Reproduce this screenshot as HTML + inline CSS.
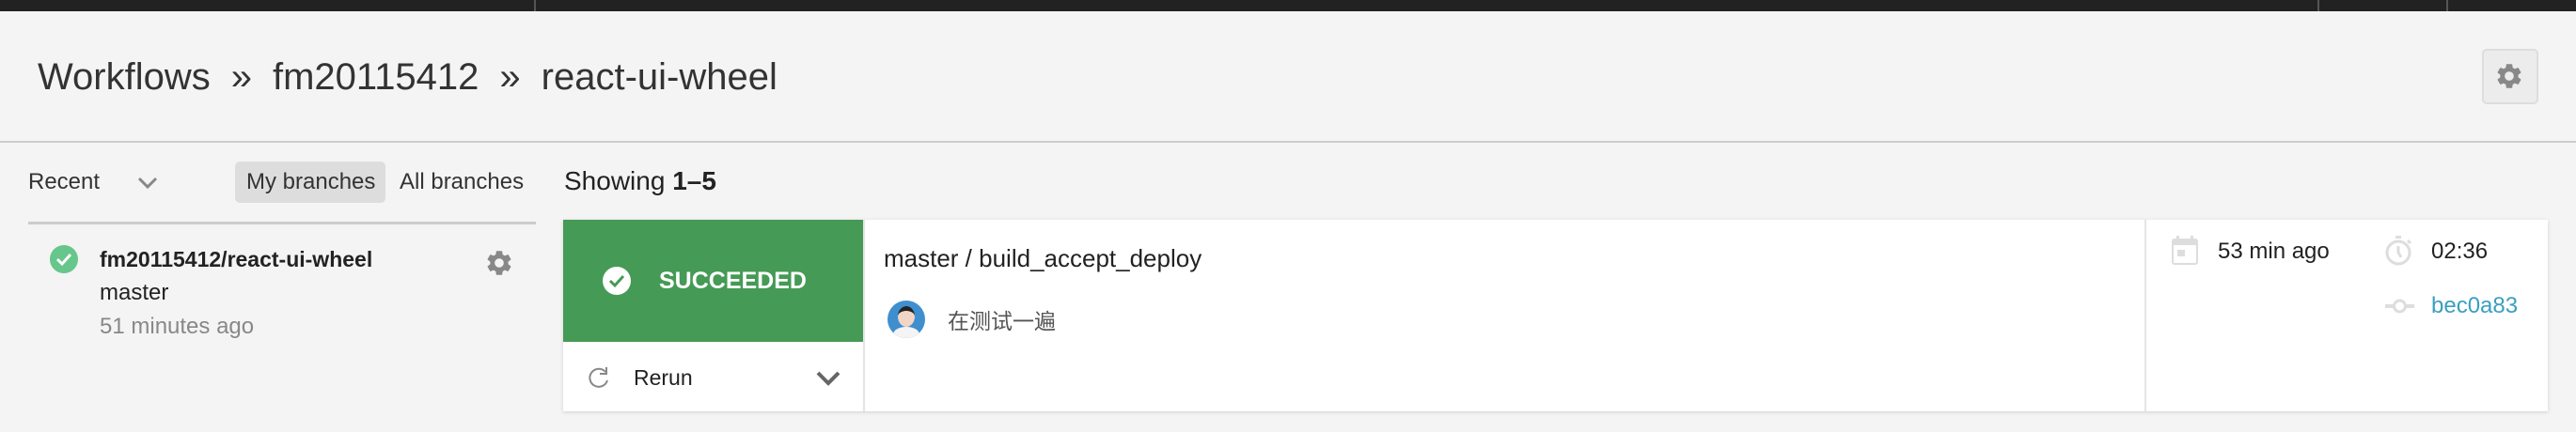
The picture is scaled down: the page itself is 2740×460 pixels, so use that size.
<!DOCTYPE html>
<html><head><meta charset="utf-8"><style>
*{margin:0;padding:0;box-sizing:border-box}
body{width:2740px;height:460px;background:#f4f4f4;font-family:"Liberation Sans","Noto Sans CJK SC",sans-serif;position:relative;overflow:hidden;color:#222}
.a{position:absolute;white-space:nowrap}
</style></head><body>
<div class="a" style="left:0;top:0;width:2740px;height:12px;background:#222"></div>
<div class="a" style="left:568px;top:0;width:2px;height:12px;background:#555"></div>
<div class="a" style="left:2465px;top:0;width:2px;height:12px;background:#555"></div>
<div class="a" style="left:2602px;top:0;width:2px;height:12px;background:#555"></div>
<div class="a" style="left:0;top:150px;width:2740px;height:2px;background:#ccc"></div>

<div class="a" style="left:40px;top:58px;font-size:40px;color:#333;line-height:48px">Workflows<span style="margin:0 22px">»</span>fm20115412<span style="margin:0 22px">»</span>react-ui-wheel</div>

<div class="a" style="left:2640px;top:52px;width:60px;height:59px;background:#ececec;border:2px solid #ddd;border-radius:5px"></div>
<svg class="a" style="left:2653px;top:65px" width="32" height="32" viewBox="0 0 24 24"><path fill="#888" d="M19.14 12.94c.04-.3.06-.61.06-.94 0-.32-.02-.64-.07-.94l2.03-1.58a.49.49 0 0 0 .12-.61l-1.92-3.32a.488.488 0 0 0-.59-.22l-2.39.96c-.5-.38-1.03-.7-1.62-.94l-.36-2.54a.484.484 0 0 0-.48-.41h-3.84c-.24 0-.43.17-.47.41l-.36 2.54c-.59.24-1.13.57-1.62.94l-2.39-.96c-.22-.08-.47 0-.59.22L2.74 8.87c-.12.21-.08.47.12.61l2.03 1.58c-.05.3-.09.63-.09.94s.02.64.07.94l-2.03 1.58a.49.49 0 0 0-.12.61l1.92 3.32c.12.22.37.29.59.22l2.39-.96c.5.38 1.03.7 1.62.94l.36 2.54c.05.24.24.41.48.41h3.84c.24 0 .44-.17.47-.41l.36-2.54c.59-.24 1.13-.56 1.62-.94l2.39.96c.22.08.47 0 .59-.22l1.92-3.32c.12-.22.07-.47-.12-.61l-2.01-1.58zM12 15.6c-1.98 0-3.6-1.62-3.6-3.6s1.62-3.6 3.6-3.6 3.6 1.62 3.6 3.6-1.62 3.6-3.6 3.6z"/></svg>

<div class="a" style="left:30px;top:180px;font-size:24px;line-height:28px;color:#333">Recent</div>
<svg class="a" style="left:146px;top:188px" width="22" height="14" viewBox="0 0 22 14"><path d="M2 2l9 9 9-9" fill="none" stroke="#888" stroke-width="3"/></svg>
<div class="a" style="left:250px;top:172px;width:160px;height:44px;background:#ddd;border-radius:5px"></div>
<div class="a" style="left:262px;top:180px;font-size:24px;line-height:28px;color:#333">My branches</div>
<div class="a" style="left:425px;top:180px;font-size:24px;line-height:28px;color:#333">All branches</div>
<div class="a" style="left:30px;top:236px;width:540px;height:3px;background:#ccc"></div>

<svg class="a" style="left:53px;top:261px" width="30" height="30" viewBox="0 0 30 30"><circle cx="15" cy="15" r="15" fill="#66c68b"/><path d="M8 15l5 5 9-10" fill="none" stroke="#fff" stroke-width="3"/></svg>
<div class="a" style="left:106px;top:262px;font-size:23px;font-weight:bold;line-height:28px;color:#222">fm20115412/react-ui-wheel</div>
<div class="a" style="left:106px;top:298px;font-size:24px;line-height:28px;color:#222">master</div>
<div class="a" style="left:106px;top:334px;font-size:24px;line-height:28px;color:#888">51 minutes ago</div>
<svg class="a" style="left:515px;top:264px" width="32" height="32" viewBox="0 0 24 24"><path fill="#888" d="M19.14 12.94c.04-.3.06-.61.06-.94 0-.32-.02-.64-.07-.94l2.03-1.58a.49.49 0 0 0 .12-.61l-1.92-3.32a.488.488 0 0 0-.59-.22l-2.39.96c-.5-.38-1.03-.7-1.62-.94l-.36-2.54a.484.484 0 0 0-.48-.41h-3.84c-.24 0-.43.17-.47.41l-.36 2.54c-.59.24-1.130.57-1.620.94l-2.39-.96c-.22-.08-.47 0-.59.22L2.74 8.87c-.12.21-.08.47.12.61l2.03 1.58c-.05.3-.09.63-.09.94s.02.64.07.94l-2.03 1.58a.49.49 0 0 0-.12.61l1.92 3.32c.12.22.37.29.59.22l2.39-.96c.5.38 1.03.7 1.62.94l.36 2.54c.05.24.24.41.48.41h3.84c.24 0 .44-.17.47-.41l.36-2.54c.59-.24 1.13-.56 1.62-.94l2.39.96c.22.08.47 0 .59-.22l1.92-3.32c.12-.22.07-.47-.12-.61l-2.01-1.58zM12 15.6c-1.98 0-3.6-1.62-3.6-3.6s1.62-3.6 3.6-3.6 3.6 1.62 3.6 3.6-1.62 3.6-3.6 3.6z"/></svg>

<div class="a" style="left:600px;top:176px;font-size:28px;line-height:34px;color:#222">Showing <b>1–5</b></div>

<div class="a" style="left:599px;top:234px;width:2111px;height:204px;background:#fff;box-shadow:0 1px 4px rgba(0,0,0,.15)"></div>
<div class="a" style="left:599px;top:234px;width:319px;height:130px;background:#459a55"></div>
<svg class="a" style="left:641px;top:284px" width="30" height="30" viewBox="0 0 30 30"><circle cx="15" cy="15" r="15" fill="#fff"/><path d="M8 15l5 5 9-10" fill="none" stroke="#459a55" stroke-width="3"/></svg>
<div class="a" style="left:701px;top:284px;font-size:25px;font-weight:bold;line-height:30px;color:#fff">SUCCEEDED</div>
<svg class="a" style="left:624px;top:389px" width="26" height="26" viewBox="0 0 26 26"><path d="M20 7A9.5 9.5 0 1 0 22 16" fill="none" stroke="#888" stroke-width="2"/><path d="M21 2v7h-7" fill="none" stroke="#888" stroke-width="2"/></svg>
<div class="a" style="left:674px;top:388px;font-size:23px;line-height:28px;color:#222">Rerun</div>
<svg class="a" style="left:868px;top:394px" width="26" height="18" viewBox="0 0 26 18"><path d="M2 3l11 11 11-11" fill="none" stroke="#666" stroke-width="4"/></svg>
<div class="a" style="left:918px;top:234px;width:2px;height:204px;background:#e4e4e4"></div>

<div class="a" style="left:940px;top:259px;font-size:26px;line-height:32px;color:#222">master / build_accept_deploy</div>
<div class="a" style="left:944px;top:320px;width:40px;height:40px;border-radius:50%;background:#3f8fcf;overflow:hidden">
<div class="a" style="left:11px;top:6px;width:18px;height:22px;border-radius:50%;background:#f1d6c8;border-top:5px solid #222"></div>
<div class="a" style="left:6px;top:28px;width:28px;height:16px;border-radius:50% 50% 0 0;background:#f4f4f4"></div></div>
<div class="a" style="left:1008px;top:326px;font-size:23px;line-height:32px;color:#555">在测试一遍</div>

<div class="a" style="left:2281px;top:234px;width:2px;height:204px;background:#e4e4e4"></div>
<svg class="a" style="left:2310px;top:251px" width="28" height="31" viewBox="0 0 28 31"><rect x="1" y="4" width="26" height="26" rx="2" fill="none" stroke="#ddd" stroke-width="2"/><rect x="1" y="4" width="26" height="6" fill="#ddd"/><rect x="5" y="0" width="3" height="6" fill="#ddd"/><rect x="20" y="0" width="3" height="6" fill="#ddd"/><rect x="6" y="15" width="8" height="7" fill="#ddd"/></svg>
<div class="a" style="left:2359px;top:253px;font-size:24px;line-height:30px;color:#222">53 min ago</div>
<svg class="a" style="left:2537px;top:251px" width="30" height="32" viewBox="0 0 30 32"><circle cx="14" cy="18" r="12" fill="none" stroke="#ddd" stroke-width="3"/><rect x="11" y="0" width="6" height="3" fill="#ddd"/><path d="M14 11v7l3 5" fill="none" stroke="#ddd" stroke-width="3"/><path d="M24 5l3 3" stroke="#ddd" stroke-width="3"/></svg>
<div class="a" style="left:2586px;top:253px;font-size:24px;line-height:30px;color:#222">02:36</div>
<svg class="a" style="left:2537px;top:318px" width="31" height="16" viewBox="0 0 31 16"><rect x="0" y="6" width="31" height="4" fill="#ddd"/><circle cx="15.5" cy="8" r="6" fill="#fff" stroke="#ddd" stroke-width="3"/></svg>
<div class="a" style="left:2586px;top:311px;font-size:24px;line-height:30px;color:#3a9fbf">bec0a83</div>
</body></html>
